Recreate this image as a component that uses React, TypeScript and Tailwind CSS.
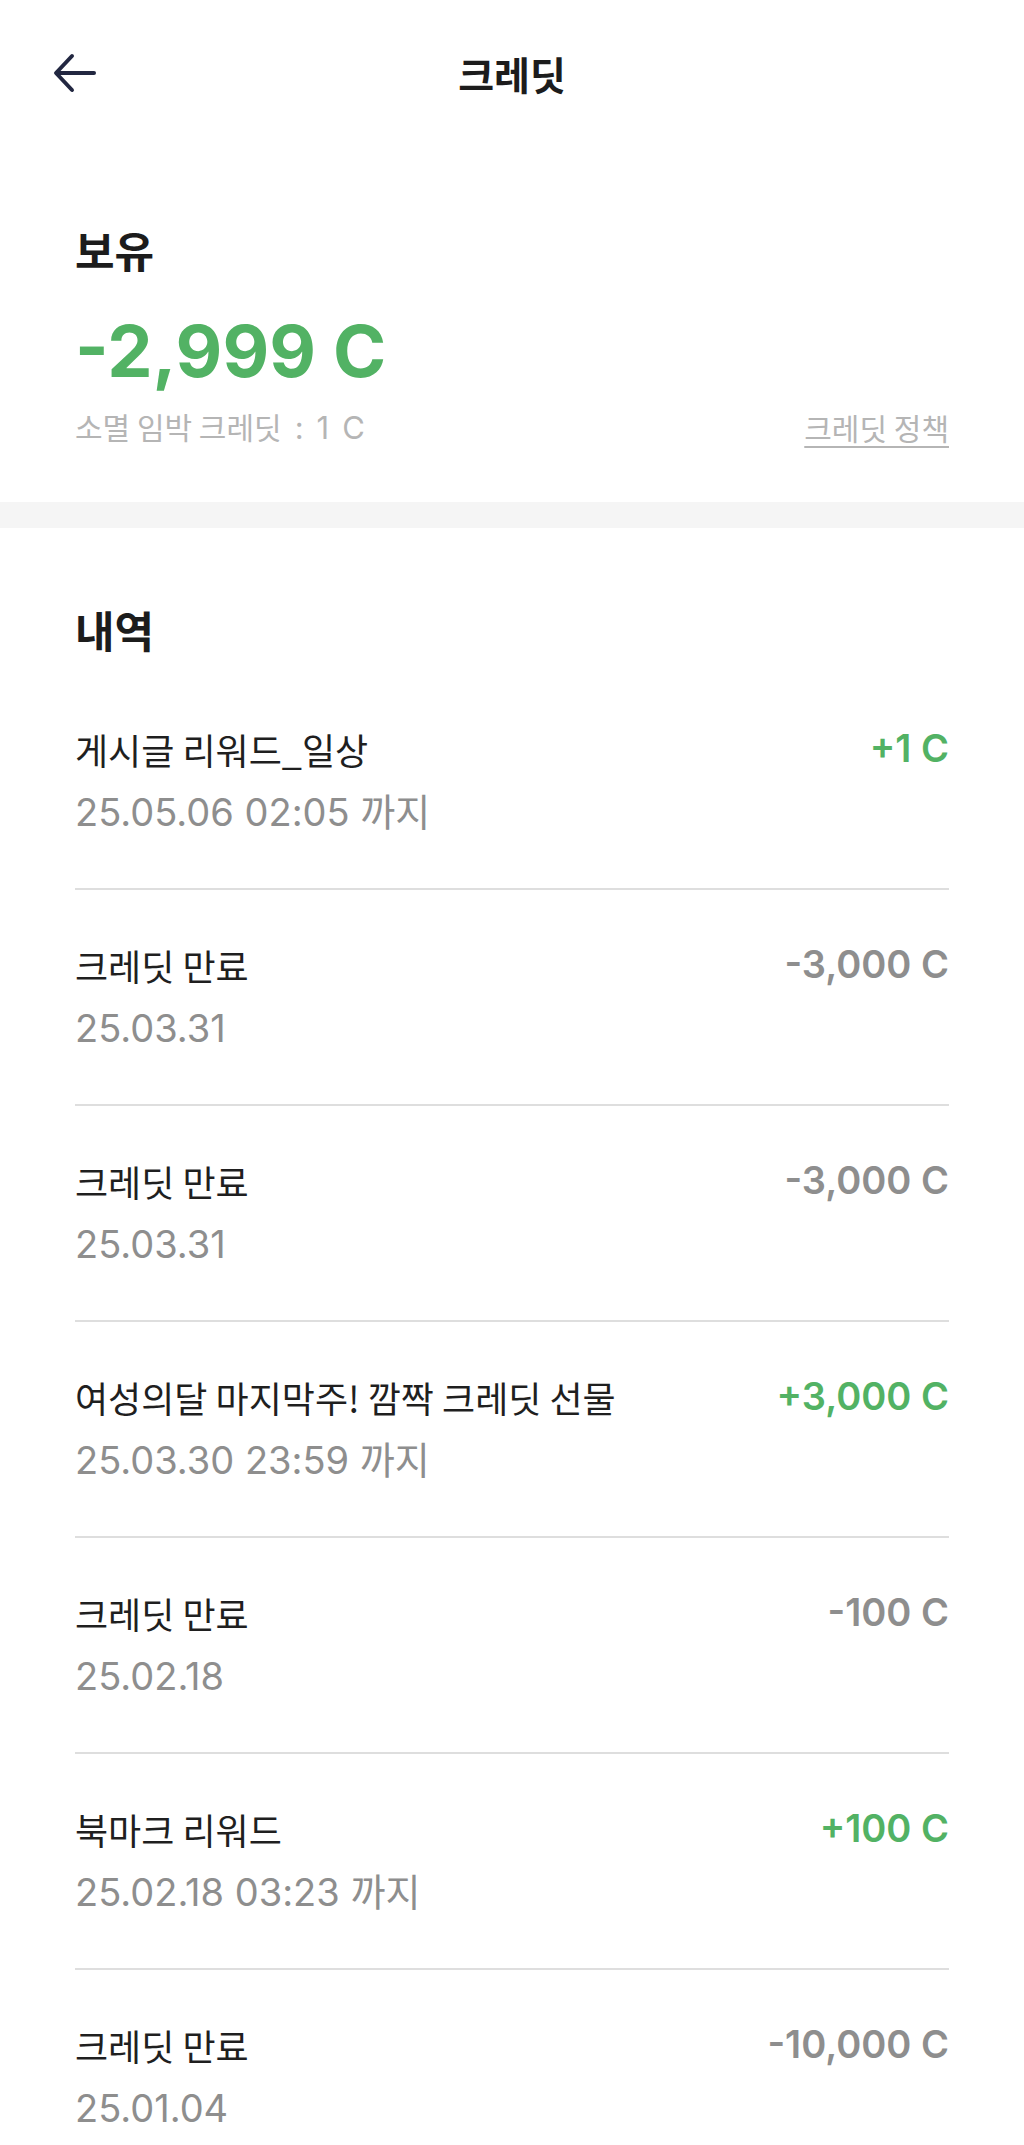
const ROWS = [
  { title: "게시글 리워드_일상", date: "25.05.06 02:05 까지", amount: "+1 C", plus: true },
  { title: "크레딧 만료", date: "25.03.31", amount: "-3,000 C", plus: false },
  { title: "크레딧 만료", date: "25.03.31", amount: "-3,000 C", plus: false },
  { title: "여성의달 마지막주! 깜짝 크레딧 선물", date: "25.03.30 23:59 까지", amount: "+3,000 C", plus: true },
  { title: "크레딧 만료", date: "25.02.18", amount: "-100 C", plus: false },
  { title: "북마크 리워드", date: "25.02.18 03:23 까지", amount: "+100 C", plus: true },
  { title: "크레딧 만료", date: "25.01.04", amount: "-10,000 C", plus: false },
];

function BackArrow() {
  return (
    <svg width="44" height="40" viewBox="0 0 44 40" fill="none" stroke="#222741" strokeWidth="4" strokeLinecap="round" strokeLinejoin="round">
      <path d="M41 20H4" />
      <path d="M19 3L3 20l16 17" />
    </svg>
  );
}

export default function App() {
  return (
    <div className="min-h-screen bg-white font-['Noto_Sans_CJK_KR',sans-serif] text-[#1c1c1c]">
      {/* header */}
      <div className="grid grid-cols-[1fr_auto_1fr] items-center h-[146px] px-[53px]">
        <button className="w-[44px] h-[40px] flex items-center">
          <BackArrow />
        </button>
        <h1 className="text-[39px] leading-[46px] font-bold">크레딧</h1>
        <div />
      </div>

      {/* balance */}
      <div className="px-[75px] pt-[78px] pb-[56px]">
        <div className="text-[43px] leading-[50px] font-bold">보유</div>
        <div className="mt-[41px] font-['Inter',sans-serif] text-[72px] leading-[72px] font-bold text-[#52b264]">
          -2,999 C
        </div>
        <div className="mt-[21px] flex items-center justify-between text-[30px] leading-[36px] text-[#b5b5b5]">
          <span>
            소멸 임박 크레딧
            <span className="ml-[13px] font-['Inter','Noto_Sans_CJK_KR',sans-serif] text-[31px]">:</span>
            <span className="ml-[13px] font-['Inter','Noto_Sans_CJK_KR',sans-serif] text-[31px]">1</span>
            <span className="ml-[13px] font-['Inter','Noto_Sans_CJK_KR',sans-serif] text-[31px]">C</span>
          </span>
          <a className="underline underline-offset-[6px] decoration-[2px]">크레딧 정책</a>
        </div>
      </div>

      <div className="h-[26px] bg-[#f5f5f5]" />

      {/* history */}
      <div className="px-[75px] pt-[76px]">
        <div className="text-[43px] leading-[50px] font-bold">내역</div>
        <div className="mt-[20px] divide-y-2 divide-[#dedede]">
          {ROWS.map((row, i) => (
            <div key={i} className="flex items-start justify-between pt-[54px] pb-[53px]">
              <div>
                <div className="text-[36px] leading-[42px] text-[#1f1f1f]">{row.title}</div>
                <div className="mt-[19px] font-['Inter','Noto_Sans_CJK_KR',sans-serif] text-[38px] leading-[46px] text-[#8e8e8e]">
                  {row.date}
                </div>
              </div>
              <div
                className={`font-['Inter',sans-serif] text-[38px] leading-[40px] font-semibold ${
                  row.plus ? "text-[#52b264]" : "text-[#8e8e8e]"
                }`}
              >
                {row.amount}
              </div>
            </div>
          ))}
        </div>
      </div>
    </div>
  );
}
